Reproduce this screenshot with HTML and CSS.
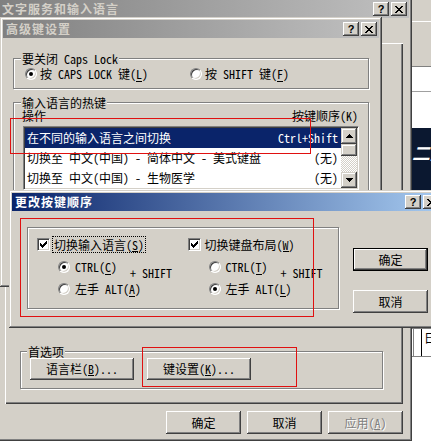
FILE: index.html
```html
<!DOCTYPE html>
<html lang="zh-CN">
<head>
    <meta charset="UTF-8">
    <title>文字服务和输入语言</title>
    <link rel="stylesheet" href="styles.css">
</head>
<body>
<div class="desktop">

    <div class="back-app">
        <div class="ba-top"></div>
        <div class="ba-panel"></div>
        <div class="ba-field"></div>
        <div class="ba-field tall"></div>
        <div class="ba-banner">二成</div>
        <div class="ba-hidden"></div>
        <div class="ba-edit"><span class="ba-bar"></span><span class="ba-glyph">日</span></div>
        <div class="ba-white"></div>
    </div>

    <div class="win win-main">
        <div class="caption inactive">
            <span class="cap-title">文字服务和输入语言</span>
            <span class="cap-btn">?</span>
            <span class="cap-btn"><svg class="x-ico" width="8" height="7" viewBox="0 0 8 7"><path d="M0 0h2v1H0zM6 0h2v1H6zM1 1h2v1H1zM5 1h2v1H5zM2 2h4v1H2zM3 3h2v1H3zM2 4h4v1H2zM1 5h2v1H1zM5 5h2v1H5zM0 6h2v1H0zM6 6h2v1H6z"/></svg></span>
        </div>
        <div class="tab-page">
            <fieldset class="group prefs">
                <legend>首选项</legend>
                <button class="btn wide"><span class="k u42">语言栏(B)...</span></button>
                <button class="btn wide"><span class="k u42">键设置(K)...</span></button>
            </fieldset>
        </div>
        <div class="dlg-btns">
            <button class="btn">确定</button>
            <button class="btn">取消</button>
            <button class="btn" disabled><span class="k u30">应用(A)</span></button>
        </div>
    </div>

    <div class="win win-adv">
        <div class="caption inactive">
            <span class="cap-title">高级键设置</span>
            <span class="cap-btn">?</span>
            <span class="cap-btn"><svg class="x-ico" width="8" height="7" viewBox="0 0 8 7"><path d="M0 0h2v1H0zM6 0h2v1H6zM1 1h2v1H1zM5 1h2v1H5zM2 2h4v1H2zM3 3h2v1H3zM2 4h4v1H2zM1 5h2v1H1zM5 5h2v1H5zM0 6h2v1H0zM6 6h2v1H6z"/></svg></span>
        </div>
        <div class="adv-body">
            <fieldset class="group caps">
                <legend>要关闭 Caps Lock</legend>
                <label class="opt"><span class="radio on"></span><span class="k u96">按 CAPS LOCK 键(L)</span></label>
                <label class="opt"><span class="radio"></span><span class="k u72">按 SHIFT 键(F)</span></label>
            </fieldset>
            <fieldset class="group hotkeys">
                <legend>输入语言的热键</legend>
                <div class="cols"><span>操作</span><span class="k u54">按键顺序(K)</span></div>
                <div class="listbox">
                    <ul class="rows">
                        <li class="sel"><span>在不同的输入语言之间切换</span><span>Ctrl+Shift</span></li>
                        <li><span>切换至 中文(中国) - 简体中文 - 美式键盘</span><span>(无)</span></li>
                        <li><span>切换至 中文(中国) - 生物医学</span><span>(无)</span></li>
                    </ul>
                    <div class="vscroll">
                        <span class="sb-btn"><svg width="7" height="4" viewBox="0 0 7 4"><path d="M3 0h1v1H3zM2 1h3v1H2zM1 2h5v1H1zM0 3h7v1H0z"/></svg></span>
                        <span class="sb-thumb"></span>
                        <span class="sb-track"></span>
                        <span class="sb-btn"><svg width="7" height="4" viewBox="0 0 7 4"><path d="M0 0h7v1H0zM1 1h5v1H1zM2 2h3v1H2zM3 3h1v1H3z"/></svg></span>
                    </div>
                </div>
            </fieldset>
        </div>
    </div>

    <div class="win win-order">
        <div class="caption active">
            <span class="cap-title">更改按键顺序</span>
            <span class="cap-btn">?</span>
            <span class="cap-btn"><svg class="x-ico" width="8" height="7" viewBox="0 0 8 7"><path d="M0 0h2v1H0zM6 0h2v1H6zM1 1h2v1H1zM5 1h2v1H5zM2 2h4v1H2zM3 3h2v1H3zM2 4h4v1H2zM1 5h2v1H1zM5 5h2v1H5zM0 6h2v1H0zM6 6h2v1H6z"/></svg></span>
        </div>
        <div class="order-body">
            <div class="group keys">
                <div class="key-col">
                    <label class="check"><span class="box"><svg width="7" height="7" viewBox="0 0 7 7"><path d="M6 0h1v1H6zM5 1h2v1H5zM0 2h1v1H0zM4 2h3v1H4zM0 3h2v1H0zM3 3h3v1H3zM0 4h5v1H0zM1 5h3v1H1zM2 6h1v1H2z"/></svg></span><span class="focus"><span class="k u78">切换输入语言(S)</span></span></label>
                    <div class="combo">
                        <label class="opt first"><span class="radio on"></span><span class="k u30">CTRL(C)</span></label>
                        <label class="opt second"><span class="radio"></span><span class="k u54">左手 ALT(A)</span></label>
                        <span class="plus">+ SHIFT</span>
                    </div>
                </div>
                <div class="key-col">
                    <label class="check"><span class="box"><svg width="7" height="7" viewBox="0 0 7 7"><path d="M6 0h1v1H6zM5 1h2v1H5zM0 2h1v1H0zM4 2h3v1H4zM0 3h2v1H0zM3 3h3v1H3zM0 4h5v1H0zM1 5h3v1H1zM2 6h1v1H2z"/></svg></span><span class="nofocus"><span class="k u78">切换键盘布局(W)</span></span></label>
                    <div class="combo">
                        <label class="opt first"><span class="radio"></span><span class="k u30">CTRL(T)</span></label>
                        <label class="opt second"><span class="radio on"></span><span class="k u54">左手 ALT(L)</span></label>
                        <span class="plus">+ SHIFT</span>
                    </div>
                </div>
            </div>
            <div class="side-btns">
                <button class="btn default">确定</button>
                <button class="btn">取消</button>
            </div>
        </div>
    </div>

    <div class="mark mark-list"></div>
    <div class="mark mark-order"></div>
    <div class="mark mark-keys"></div>
</div>
</body>
</html>
```

FILE: styles.css
```css
* {
    margin: 0;
    padding: 0;
    box-sizing: border-box;
}
body {
    background: #d4d0c8;
    color: #000;
    font: 12px/16px "Noto Sans CJK SC", sans-serif;
    font-feature-settings: "hwid";
    text-autospace: no-autospace;
}
.desktop {
    position: relative;
    width: 431px;
    height: 441px;
    overflow: hidden;
}

/* access-key underline, drawn under one half-width cell */
.k {
    background: linear-gradient(currentColor, currentColor) no-repeat;
    background-size: 6px 1px;
    background-position-y: 15px;
}
.u30 { background-position-x: 30px; }
.u42 { background-position-x: 42px; }
.u54 { background-position-x: 54px; }
.u72 { background-position-x: 72px; }
.u78 { background-position-x: 78px; }
.u96 { background-position-x: 96px; }

/* window behind, only its left strip shows */
.back-app {
    position: absolute;
    left: 400px;
    top: 0;
    width: 31px;
    height: 441px;
    display: flex;
    flex-direction: column;
    background: #d4d0c8;
}
.ba-top {
    height: 22px;
    border-bottom: 1px solid #fff;
}
.ba-panel {
    height: 44px;
}
.ba-field {
    height: 26px;
    background: #fff;
    border-top: 1px solid #808080;
    border-bottom: 1px solid #a0a0a0;
}
.ba-field.tall {
    height: 36px;
    border-top: 0;
    border-bottom: 0;
}
.ba-banner {
    height: 62px;
    background: #0b1830;
    color: #fff;
    font: italic bold 18px/20px "DejaVu Sans", "Noto Sans CJK SC", sans-serif;
    padding: 16px 0 0 12px;
    white-space: nowrap;
    overflow: hidden;
}
.ba-hidden {
    height: 138px;
}
.ba-edit {
    height: 29px;
    display: flex;
    align-items: stretch;
    gap: 7px;
    padding-left: 13px;
    border-top: 1px solid #808080;
    border-bottom: 1px solid #808080;
    background: #fff;
}
.ba-bar {
    width: 4px;
    background: #d4d0c8;
    border-right: 1px solid #808080;
}
.ba-glyph {
    padding-left: 2px;
    border-left: 1px solid #000;
    line-height: 18px;
}
.ba-white {
    flex: 1;
    background: #fff;
}

/* classic window frame */
.win {
    position: absolute;
    display: flex;
    flex-direction: column;
    padding: 3px;
    background: #d4d0c8;
    box-shadow: inset -1px -1px #404040, inset 1px 1px #d4d0c8, inset -2px -2px #808080, inset 2px 2px #fff;
}
.win-main {
    left: -4px;
    top: -3px;
    width: 416px;
    height: 444px;
}
.win-adv {
    left: 0;
    top: 17px;
    width: 382px;
    height: 270px;
}
.win-order {
    left: 9px;
    top: 190px;
    width: 435px;
    height: 138px;
}
.caption {
    display: flex;
    align-items: center;
    gap: 2px;
    height: 18px;
    flex: none;
    padding: 0 2px 0 3px;
}
.caption.inactive {
    background: linear-gradient(to right, #808080, #c0c0c0);
    color: #d4d0c8;
}
.caption.active {
    background: linear-gradient(to right, #0a246a, #a6caf0);
    color: #fff;
}
.cap-title {
    flex: 1;
    font-weight: bold;
    letter-spacing: 1px;
}
.cap-btn {
    width: 16px;
    height: 14px;
    display: flex;
    align-items: center;
    justify-content: center;
    background: #d4d0c8;
    color: #000;
    font: bold 11px/1 "Liberation Sans", sans-serif;
    box-shadow: inset -1px -1px #404040, inset 1px 1px #fff, inset -2px -2px #808080;
}
.x-ico {
    fill: #000;
}

/* controls */
.btn {
    width: 75px;
    height: 23px;
    border: 0;
    background: #d4d0c8;
    color: #000;
    font: inherit;
    box-shadow: inset -1px -1px #404040, inset 1px 1px #fff, inset -2px -2px #808080, inset 2px 2px #d4d0c8;
}
.btn.default {
    box-shadow: inset 0 0 0 1px #000, inset -2px -2px #404040, inset 2px 2px #fff, inset -3px -3px #808080;
}
.btn:disabled {
    color: #808080;
    text-shadow: 1px 1px #fff;
}
.btn.wide {
    width: 104px;
    height: 22px;
}
.group {
    border: 1px solid #808080;
    box-shadow: inset 1px 1px #fff, 1px 1px #fff;
}
.group legend {
    padding: 0 1px;
    line-height: 13px;
    background: #d4d0c8;
}
.opt {
    display: flex;
    align-items: center;
    gap: 3px;
    white-space: nowrap;
}
.radio {
    width: 12px;
    height: 12px;
    border-radius: 50%;
    border: 1px solid;
    border-color: #808080 #fff #fff #808080;
    box-shadow: inset 1px 1px #404040, inset -1px -1px #d4d0c8;
    background: #fff;
    display: flex;
    align-items: center;
    justify-content: center;
}
.radio.on::after {
    content: "";
    width: 4px;
    height: 4px;
    border-radius: 50%;
    background: #000;
}
.box {
    width: 13px;
    height: 13px;
    flex: none;
    border: 1px solid;
    border-color: #808080 #fff #fff #808080;
    box-shadow: inset 1px 1px #404040, inset -1px -1px #d4d0c8;
    background: #fff;
    padding: 2px;
    display: flex;
    align-items: center;
    justify-content: center;
}

/* outer property sheet */
.tab-page {
    margin: 25px 0 0 6px;
    width: 398px;
    height: 361px;
    display: flex;
    flex-direction: column;
    justify-content: flex-end;
    padding: 0 0 15px 15px;
    box-shadow: inset 1px 1px #fff, inset -1px -1px #404040, inset -2px -2px #808080;
}
.prefs {
    width: 363px;
    height: 44px;
    display: flex;
    gap: 13px;
    padding: 0 0 0 9px;
}
.prefs legend {
    margin-left: -3px;
}
.dlg-btns {
    display: flex;
    justify-content: flex-end;
    gap: 6px;
    margin-top: 7px;
    padding-right: 6px;
}

/* advanced key settings */
.adv-body {
    padding: 0 10px;
}
.caps {
    margin-top: 14px;
    height: 37px;
    display: grid;
    grid-template-columns: 165px auto;
    grid-template-rows: 16px;
    padding: 1px 0 6px 11px;
}
.caps legend {
    margin-left: -4px;
}
.hotkeys {
    margin-top: 7px;
    height: 170px;
    padding: 0 9px;
}
.hotkeys legend {
    margin-left: -2px;
}
.cols {
    display: flex;
    justify-content: space-between;
    line-height: 12px;
    margin: 1px 1px 4px -1px;
}
.listbox {
    display: flex;
    height: 64px;
    padding: 1px;
    background: #fff;
    border: 1px solid;
    border-color: #808080 #fff #fff #808080;
    box-shadow: inset 1px 1px #404040, inset -1px -1px #d4d0c8;
}
.rows {
    flex: 1;
    list-style: none;
}
.rows li {
    display: flex;
    justify-content: space-between;
    height: 20px;
    line-height: 20px;
    padding: 0 3px 0 2px;
    white-space: nowrap;
}
.rows li.sel {
    background: #0a246a;
    color: #fff;
}
.vscroll {
    width: 16px;
    display: flex;
    flex-direction: column;
}
.sb-btn, .sb-thumb {
    height: 16px;
    display: flex;
    align-items: center;
    justify-content: center;
    background: #d4d0c8;
    box-shadow: inset -1px -1px #404040, inset 1px 1px #d4d0c8, inset -2px -2px #808080, inset 2px 2px #fff;
}
.sb-thumb {
    height: 12px;
}
.sb-track {
    flex: 1;
    background: repeating-conic-gradient(#fff 0 25%, #d4d0c8 0 50%) 0 0 / 2px 2px;
}

/* change key sequence */
.order-body {
    display: flex;
    padding: 16px 0 0 15px;
}
.keys {
    width: 312px;
    height: 82px;
    display: flex;
    padding: 8px 0 0 9px;
}
.key-col {
    width: 160px;
}
.check {
    display: flex;
    align-items: center;
    gap: 2px;
    height: 17px;
}
.focus, .nofocus {
    padding: 0 1px;
    border: 1px dotted #000;
    line-height: 15px;
}
.nofocus {
    border-color: transparent;
}
.combo {
    display: grid;
    grid-template-columns: 72px auto;
    grid-template-rows: 16px 16px;
    row-gap: 6px;
    margin: 6px 0 0 21px;
}
.combo .opt {
    grid-column: 1 / 3;
    gap: 5px;
}
.combo .first {
    grid-row: 1;
}
.combo .second {
    grid-row: 2;
}
.plus {
    grid-column: 2;
    grid-row: 1 / 3;
    margin-top: 6px;
    white-space: nowrap;
}
.side-btns {
    display: flex;
    flex-direction: column;
    gap: 19px;
    margin-left: 14px;
    padding-top: 21px;
}

/* red annotation frames drawn over the shot */
.mark {
    position: absolute;
    border: 1px solid #e01010;
}
.mark-list {
    left: 10px;
    top: 118px;
    width: 301px;
    height: 36px;
}
.mark-order {
    left: 20px;
    top: 218px;
    width: 294px;
    height: 99px;
}
.mark-keys {
    left: 142px;
    top: 347px;
    width: 155px;
    height: 40px;
}
```
